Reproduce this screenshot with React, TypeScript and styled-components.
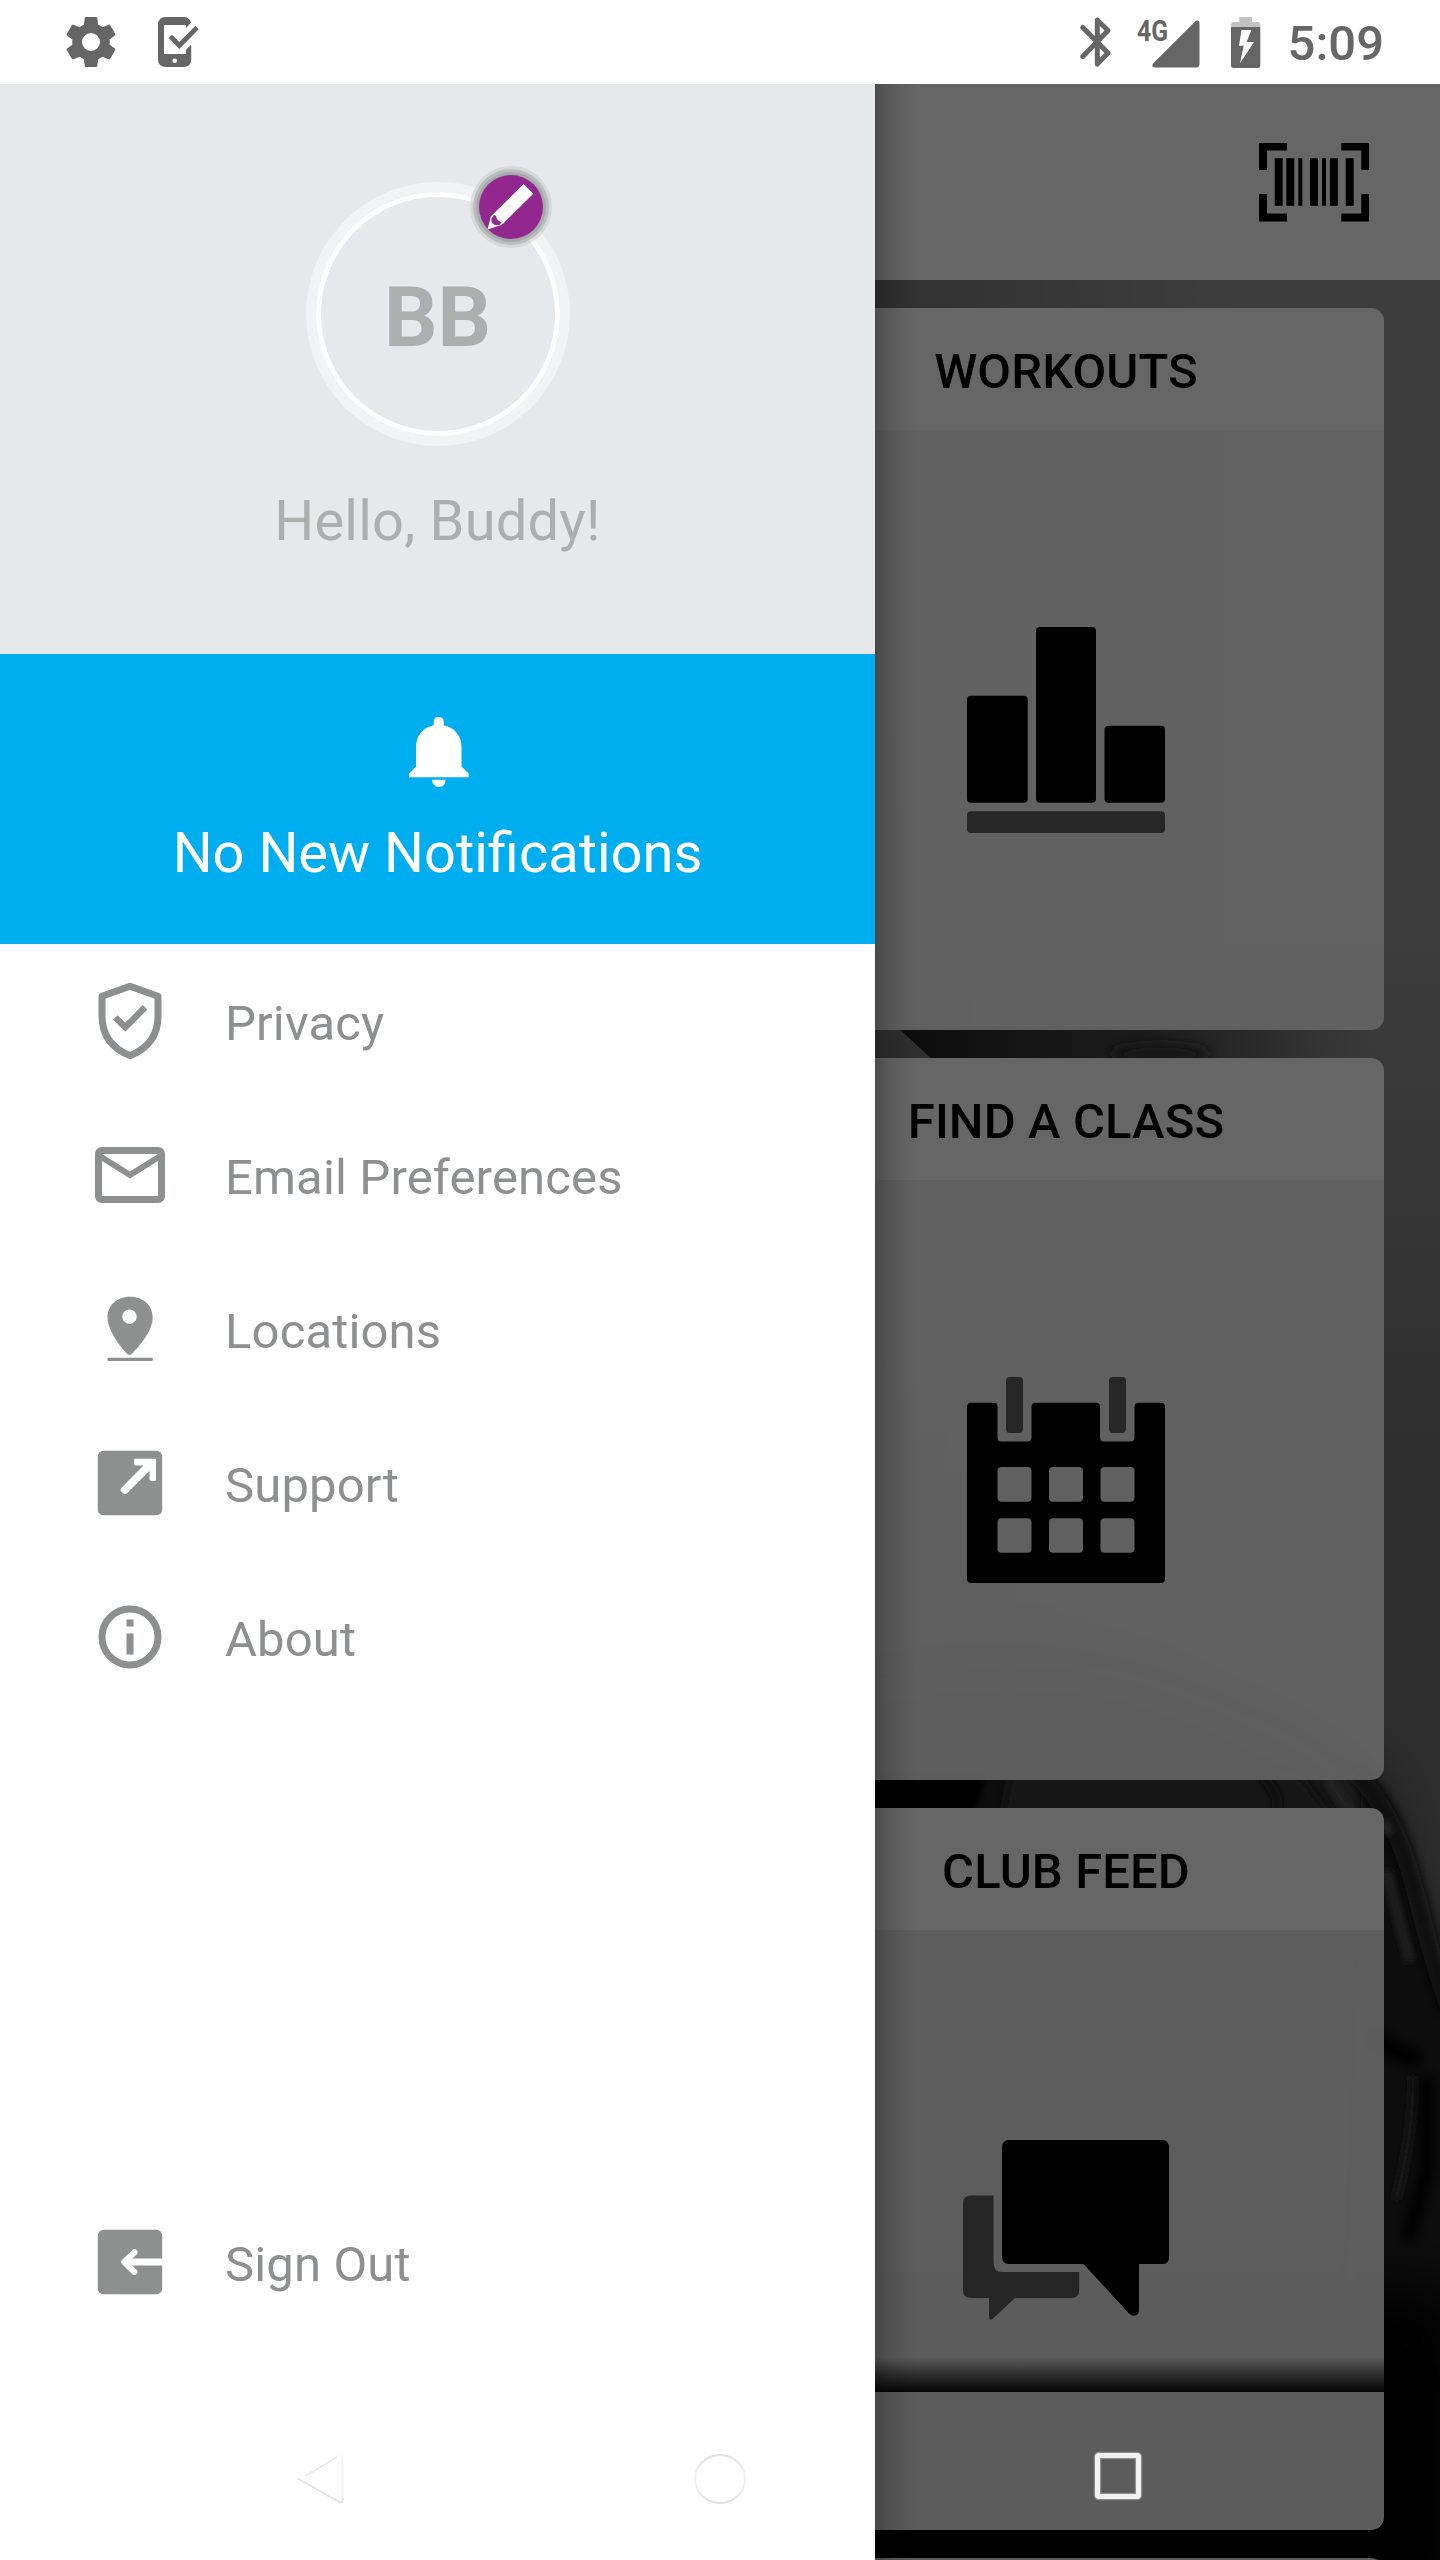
import React from "react";
import styled, { createGlobalStyle } from "styled-components";

const GlobalStyle = createGlobalStyle`
  *, *::before, *::after { box-sizing: border-box; }
  html, body { margin: 0; padding: 0; background: #fff; }
  body { font-family: Roboto, "Noto Sans", sans-serif; }
  svg { display: block; flex: none; }
`;

const Screen = styled.div`
  position: relative;
  width: 1440px;
  height: 2560px;
  overflow: hidden;
  display: flex;
  flex-direction: column;
  background: #fff;
`;

/* ---------- status bar ---------- */

const StatusBar = styled.header`
  height: 84px;
  flex: none;
  display: flex;
  justify-content: space-between;
  padding: 0 56px 0 61px;
  color: #666;
`;

const StatusGroup = styled.div<{ $gap: number }>`
  display: flex;
  align-items: center;
  gap: ${(p) => p.$gap}px;
`;

const Clock = styled.span`
  font-size: 49px;
  font-weight: 500;
  line-height: 58px;
  padding-top: 4px;
  margin-left: -3px;
`;

/* ---------- stage: dashboard with the drawer over it ---------- */

const Stage = styled.div`
  flex: 1;
  min-height: 0;
  display: grid;
  grid-template: minmax(0, 1fr) / minmax(0, 1fr);
  > * {
    grid-area: 1 / 1;
  }
`;

const Scenery = styled.svg`
  width: 1440px;
  height: 2476px;
`;

const Dashboard = styled.main`
  display: flex;
  flex-direction: column;
  z-index: 1;
  overflow: hidden;
`;

const Toolbar = styled.div`
  height: 196px;
  flex: none;
  display: flex;
  align-items: center;
  justify-content: flex-end;
  padding: 0 71px 0 0;
  background: #666;
`;

const CardColumn = styled.div`
  display: flex;
  flex-direction: column;
  gap: 28px;
  padding: 28px 56px 0 748px;
`;

const Card = styled.section`
  height: 722px;
  flex: none;
  display: flex;
  flex-direction: column;
  border-radius: 13px;
  overflow: hidden;
`;

const CardTitle = styled.h2`
  margin: 0;
  height: 122px;
  flex: none;
  display: flex;
  align-items: center;
  justify-content: center;
  padding-top: 5px;
  background: #666;
  color: #000;
  font-size: 49px;
  font-weight: 500;
  line-height: 58px;
  letter-spacing: 0.1px;
`;

const CardBody = styled.div`
  flex: 1;
  display: flex;
  align-items: center;
  justify-content: center;
  background: rgba(102, 102, 102, 0.9);
`;

/* ---------- drawer ---------- */

const Drawer = styled.aside`
  position: relative;
  z-index: 2;
  width: 875px;
  display: flex;
  flex-direction: column;
  background: #fff;
  &::after {
    content: "";
    position: absolute;
    left: 100%;
    top: 0;
    bottom: 0;
    width: 42px;
    background: linear-gradient(
      to right,
      rgba(0, 0, 0, 0.25),
      rgba(0, 0, 0, 0.12) 35%,
      rgba(0, 0, 0, 0.04) 75%,
      transparent
    );
  }
`;

const Profile = styled.div`
  height: 570px;
  flex: none;
  display: flex;
  flex-direction: column;
  align-items: center;
  padding-top: 98px;
  background: #e7e8ec;
  color: #adaeae;
`;

const Avatar = styled.div`
  position: relative;
  width: 264px;
  height: 264px;
  border-radius: 50%;
  border: 10px solid #f2f3f5;
  display: flex;
`;

const AvatarRing = styled.div`
  flex: 1;
  border-radius: 50%;
  border: 5px solid #fff;
  display: flex;
  align-items: center;
  justify-content: center;
  padding-top: 7px;
  font-size: 84px;
  font-weight: 700;
  line-height: 98px;
`;

const EditBadge = styled.div`
  position: absolute;
  top: -17px;
  right: 17px;
  width: 64px;
  height: 64px;
  border-radius: 50%;
  background: #92278f;
  box-shadow: 0 0 0 3px #a7aaaa, 0 0 0 6px #bbbebe, 0 0 0 9px rgba(195, 201, 200, 0.5);
`;

const Greeting = styled.div`
  margin-top: 42px;
  font-size: 56px;
  line-height: 66px;
  letter-spacing: 0.22px;
`;

const Notice = styled.div`
  height: 290px;
  flex: none;
  display: flex;
  flex-direction: column;
  align-items: center;
  padding-top: 63px;
  gap: 33px;
  background: #00adef;
  color: #fff;
  font-size: 56px;
  line-height: 66px;
`;

const Menu = styled.nav`
  display: flex;
  flex-direction: column;
`;

const SignOutArea = styled.div`
  margin-top: auto;
  margin-bottom: 221px;
`;

const MenuRow = styled.div`
  height: 154px;
  display: flex;
  align-items: center;
  gap: 53px;
  padding-left: 88px;
  color: #8e8f8f;
  font-size: 49px;
  line-height: 58px;
  letter-spacing: 0.15px;
`;

const MenuLabel = styled.span`
  padding-top: 5px;
`;

/* ---------- system navigation ---------- */

const NavFade = styled.div`
  position: absolute;
  z-index: 1;
  left: 0;
  right: 0;
  bottom: 168px;
  height: 35px;
  background: linear-gradient(to bottom, rgba(0, 0, 0, 0), rgba(0, 0, 0, 0.5) 50%, rgba(0, 0, 0, 0.95));
`;

const NavBar = styled.div`
  position: absolute;
  z-index: 3;
  left: 0;
  right: 0;
  bottom: 0;
  height: 168px;
  padding: 0 122px 0 118px;
  display: grid;
  grid-template-columns: 404px 396px 400px;
  place-items: center;
`;

/* ---------- icons ---------- */

const GearIcon = () => (
  <svg width="60" height="60" viewBox="0 0 24 24" fill="currentColor">
    <path d="M19.43 12.98c.04-.32.07-.64.07-.98s-.03-.66-.07-.98l2.11-1.65c.19-.15.24-.42.12-.64l-2-3.46c-.12-.22-.39-.3-.61-.22l-2.49 1c-.52-.4-1.08-.73-1.69-.98l-.38-2.65C14.46 2.18 14.25 2 14 2h-4c-.25 0-.46.18-.49.42l-.38 2.65c-.61.25-1.17.59-1.69.98l-2.49-1c-.23-.09-.49 0-.61.22l-2 3.46c-.13.22-.07.49.12.64l2.11 1.65c-.04.32-.07.65-.07.98s.03.66.07.98l-2.11 1.65c-.19.15-.24.42-.12.64l2 3.46c.12.22.39.3.61.22l2.49-1c.52.4 1.08.73 1.69.98l.38 2.65c.03.24.24.42.49.42h4c.25 0 .46-.18.49-.42l.38-2.65c.61-.25 1.17-.59 1.69-.98l2.49 1c.23.09.49 0 .61-.22l2-3.46c.12-.22.07-.49-.12-.64l-2.11-1.65zM12 15.6a3.6 3.6 0 1 1 0-7.2 3.6 3.6 0 0 1 0 7.2z" />
  </svg>
);

const PhoneCheckIcon = () => (
  <svg width="42" height="50" viewBox="0 0 42 50" fill="currentColor">
    <path
      fillRule="evenodd"
      d="M8 0H25.500Q31.500 0 33 5.700L28 11V8H6V37H28V32.700L33.200 27.700V42Q33.200 50 25.500 50H8Q0 50 0 42V8Q0 0 8 0ZM16.700 41.400a2.300 2.300 0 1 0 0 4.600a2.300 2.300 0 1 0 0-4.600Z"
    />
    <path d="M10.700 21L14 17.700L21.300 25L37.300 9L40.700 12.300L21.300 32Z" />
  </svg>
);

const BluetoothIcon = () => (
  <svg width="32" height="50" viewBox="0 0 32 50" fill="none" stroke="currentColor" strokeWidth="5" strokeLinecap="round" strokeLinejoin="round">
    <path d="M2.800 10.500L28 36L17.300 47V3L28 13.500L2.800 39.500" />
  </svg>
);

const SignalText = styled.text`
  font-family: Roboto, sans-serif;
  font-size: 29px;
  font-weight: 700;
`;

const SignalIcon = () => (
  <svg width="66" height="67" viewBox="-2 -8 66 67" fill="currentColor">
    <SignalText x="0" y="23.500" textLength="31" lengthAdjust="spacingAndGlyphs">
      4G
    </SignalText>
    <path d="M58 4.800Q62.500 1.500 62.500 7V47Q62.500 50.500 59 50.500H18Q13.500 50 16.500 46Z" />
  </svg>
);

const BatteryIcon = () => (
  <svg width="30" height="51" viewBox="0 0 30 51">
    <path d="M8.300 0H21V5H27Q29.300 5 29.300 7.500V10H0V7.500Q0 5 2.500 5H8.300Z" fill="#c2c2c2" />
    <path
      fillRule="evenodd"
      fill="#666"
      d="M0 10H29.300V48.500Q29.300 51 27 51H2.500Q0 51 0 48.500ZM10.500 13L8 28.700H12.700L9 46.300L23 25H15.700L20.300 13Z"
    />
  </svg>
);

const BarcodeIcon = () => (
  <svg width="110" height="79" viewBox="0 0 110 79">
    <path d="M0 0H28V7.500H8V27H0ZM82.300 0H110.300V27H102.300V7.500H82.300ZM0 51H8V70.500H28V78.500H0ZM102.300 51H110.300V78.500H82.300V70.500H102.300Z" />
    <path d="M15.700 15.300h8v47.500h-8ZM27.300 15.300h8v47.500h-8ZM39.300 15.300h4v47.500h-4ZM51 15.300h8v47.500h-8ZM63 15.300h4v47.500h-4ZM70.900 15.300h8v47.500h-8ZM86.700 15.300h8v47.500h-8Z" />
  </svg>
);

const PencilIcon = () => (
  <svg width="64" height="64" viewBox="0 0 64 64" fill="#fff">
    <path d="M44.600 9L54.300 18.700L24.500 48.300L22 50L8.500 54.500L12 41L14.600 38.700Z" />
    <path d="M14.500 40.500Q17.500 39.500 17.500 42.500Q17.500 44 20 46L22.300 47.300Q21.500 50 19.500 50.300Q12 50.500 12.300 44Z" fill="#92278f" />
  </svg>
);

const BellIcon = () => (
  <svg width="62" height="70" viewBox="-2 0 62 70" fill="#fff">
    <path d="M24.700 8.200V5Q24.700 0 29.700 0Q34.700 0 34.700 5V8.200C46 10.500 52.500 19 52.500 30V49.500L59.700 56.500V60.300H0V56.500L7 49.500V30C7 19 13.500 10.500 24.700 8.200Z" />
    <path d="M23 62.800H36.700Q36 70 29.900 70Q23.700 70 23 62.800Z" />
  </svg>
);

const icon = { width: 84, height: 84, viewBox: "0 0 84 84" };

const ShieldIcon = () => (
  <svg {...icon} fill="none" stroke="currentColor">
    <path d="M42 7.200L70 17.300V37C70 56 60 69.500 42 76.600C24 69.500 14 56 14 37V17.300Z" strokeWidth="7" strokeLinejoin="round" />
    <path d="M27.300 38.500L37.300 48.200L57 28.300" strokeWidth="6.500" />
  </svg>
);

const MailIcon = () => (
  <svg width="84" height="84" viewBox="0 0 24 24" fill="currentColor">
    <path d="M20 4H4c-1.100 0-2 .9-2 2v12c0 1.100.9 2 2 2h16c1.100 0 2-.9 2-2V6c0-1.100-.9-2-2-2zm0 14H4V8l8 5 8-5v10zm-8-7L4 6h16l-8 5z" />
  </svg>
);

const PinIcon = () => (
  <svg {...icon} fill="currentColor">
    <path
      fillRule="evenodd"
      d="M42 9.700C55.500 9.700 64.700 18.500 64.700 30.500C64.700 44 50.500 60.500 43.500 67Q41.300 68.700 39.500 67C32.500 60.500 19.500 43 19.500 30.500C19.500 18.500 28.500 9.700 42 9.700ZM41.500 22.500a7.200 7.200 0 1 0 0 14.400a7.200 7.200 0 1 0 0-14.400Z"
    />
    <rect x="19.500" y="70.800" width="45.300" height="3.300" rx="1" />
  </svg>
);

const SupportIcon = () => (
  <svg {...icon}>
    <rect x="9.800" y="9.800" width="64.400" height="64.400" rx="5.500" fill="currentColor" />
    <path d="M46.500 17.700H67Q68 17.700 68 18.700V39Q68 40 67 40H63.500Q61.500 40 61.500 38V29.800L39 52.200Q37 54.200 35 52.200L33.300 50.500Q31.500 48.500 33.500 46.700L55.500 24.500H48Q46 24.500 46 22.500V19Q46 17.700 47 17.700Z" fill="#fff" />
  </svg>
);

const InfoIcon = () => (
  <svg {...icon} fill="currentColor">
    <circle cx="42" cy="42" r="28" fill="none" stroke="currentColor" strokeWidth="7" />
    <rect x="38.500" y="24.500" width="7" height="7" />
    <rect x="38.500" y="38.500" width="7" height="21" />
  </svg>
);

const SignOutIcon = () => (
  <svg {...icon}>
    <rect x="9.800" y="9.800" width="64.400" height="64.400" rx="5.500" fill="currentColor" />
    <g fill="none" stroke="#fff" strokeLinecap="round" strokeLinejoin="round">
      <path d="M46.500 32.300L36.200 42L46.500 52" strokeWidth="6" />
      <path d="M38 42H78" strokeWidth="7" strokeLinecap="butt" />
    </g>
  </svg>
);

const ChartIcon = () => (
  <svg width="198" height="206" viewBox="0 0 198 206">
    <rect x="0" y="68.700" width="60.700" height="107" rx="4" />
    <rect x="69" y="0" width="60" height="175.700" rx="4" />
    <rect x="137.500" y="98.700" width="60.500" height="77" rx="4" />
    <rect x="0" y="184.300" width="198" height="21.700" rx="4" fill="#272727" />
  </svg>
);

const CELLS = [30.5, 82, 133.5];

const CalendarIcon = () => (
  <svg width="198" height="206" viewBox="0 0 198 206">
    <path d="M4 25.700H27Q30.500 25.700 30.500 29.700V60.500Q30.500 64.500 34.500 64.500H60.500Q64.500 64.500 64.500 60.500V29.700Q64.500 25.700 68.500 25.700H129Q133 25.700 133 29.700V60.500Q133 64.500 137 64.500H163.500Q167.500 64.500 167.500 60.500V29.700Q167.500 25.700 171.500 25.700H194Q198 25.700 198 29.700V202Q198 206 194 206H4Q0 206 0 202V29.700Q0 25.700 4 25.700Z" />
    <rect x="39" y="0" width="17" height="56" rx="4" fill="#272727" />
    <rect x="142" y="0" width="17" height="56" rx="4" fill="#272727" />
    {CELLS.map((x) => (
      <g key={x} fill="#606060">
        <rect x={x} y="90" width="34" height="34.700" rx="4" />
        <rect x={x} y="141.300" width="34" height="34.400" rx="4" />
      </g>
    ))}
  </svg>
);

const ChatIcon = () => (
  <svg width="206" height="180" viewBox="0 0 206 180">
    <path d="M46 0H199Q206 0 206 8V117Q206 124 200 124H176V170Q176 175.700 171 175.700Q168.500 175.700 166 173.500L120.500 124H46Q39 124 39 117V8Q39 0 46 0Z" />
    <path
      fill="#262626"
      d="M8 55.500H30.500V122Q30.500 132 39 132H116.200V150Q116.200 158 108.500 158H52L29.500 179Q26 181 26 177V158H8Q0 158 0 150V63.500Q0 55.500 8 55.500Z"
    />
  </svg>
);

const BackIcon = () => (
  <svg width="56" height="60" viewBox="0 0 56 60" fill="none" strokeLinecap="round">
    <path d="M50.500 10V55" stroke="#f6f6f6" strokeWidth="2" />
    <path d="M44.500 11.500L14 29.500" stroke="#e9e9e9" strokeWidth="2" />
    <path d="M6.500 33L47.500 56Q51 57 51 53" stroke="#e4e4e4" strokeWidth="2" />
  </svg>
);

const HomeIcon = () => (
  <svg width="60" height="62" viewBox="0 0 60 62" fill="none">
    <defs>
      <linearGradient id="halo" x1="0" y1="0" x2="0" y2="1">
        <stop offset="0" stopColor="#e0e0e0" />
        <stop offset="0.45" stopColor="#f1f1f1" />
        <stop offset="0.6" stopColor="#f1f1f1" />
        <stop offset="1" stopColor="#e0e0e0" />
      </linearGradient>
    </defs>
    <ellipse cx="30" cy="34" rx="25" ry="24" stroke="url(#halo)" strokeWidth="2" />
  </svg>
);

const RecentIcon = () => (
  <svg width="50" height="50" viewBox="0 0 50 50" fill="none">
    <rect x="4.500" y="4.500" width="41" height="41" rx="1.500" stroke="#aaa" strokeOpacity="0.6" strokeWidth="7.500" />
    <rect x="4.500" y="4.500" width="41" height="41" rx="1.500" stroke="#f1f1f1" strokeWidth="5" />
  </svg>
);

/* Dim gym photograph behind the cards. */
const Backdrop = () => (
  <Scenery viewBox="0 84 1440 2476" preserveAspectRatio="none">
    <defs>
      <linearGradient id="wall" x1="0" y1="84" x2="0" y2="2560" gradientUnits="userSpaceOnUse">
        <stop offset="0" stopColor="#3d3d3d" />
        <stop offset="0.34" stopColor="#3c3c3c" />
        <stop offset="0.45" stopColor="#363636" />
        <stop offset="0.58" stopColor="#2d2d2d" />
        <stop offset="0.72" stopColor="#2d2d2d" />
        <stop offset="0.8" stopColor="#222" />
        <stop offset="0.88" stopColor="#020202" />
        <stop offset="1" stopColor="#000" />
      </linearGradient>
      <linearGradient id="band" x1="900" y1="0" x2="1400" y2="0" gradientUnits="userSpaceOnUse">
        <stop offset="0" stopColor="#0c0c0c" />
        <stop offset="0.25" stopColor="#151515" />
        <stop offset="0.5" stopColor="#1c1c1d" />
        <stop offset="0.75" stopColor="#2d2d2d" />
        <stop offset="1" stopColor="#383838" stopOpacity="0" />
      </linearGradient>
      <linearGradient id="left" x1="875" y1="0" x2="1240" y2="0" gradientUnits="userSpaceOnUse">
        <stop offset="0" stopColor="#000" stopOpacity="0.2" />
        <stop offset="1" stopColor="#000" stopOpacity="0" />
      </linearGradient>
      <filter id="soft" filterUnits="userSpaceOnUse" x="700" y="84" width="840" height="2500">
        <feGaussianBlur stdDeviation="6" />
      </filter>
      <filter id="wide" filterUnits="userSpaceOnUse" x="700" y="84" width="840" height="2500">
        <feGaussianBlur stdDeviation="30" />
      </filter>
      <filter id="fine" filterUnits="userSpaceOnUse" x="700" y="84" width="840" height="2500">
        <feGaussianBlur stdDeviation="3" />
      </filter>
    </defs>
    <rect x="0" y="84" width="1440" height="2476" fill="url(#wall)" />
    <rect x="875" y="84" width="365" height="2000" fill="url(#left)" />
    <path d="M897 1027L935 1062H1400V1027Z" fill="url(#band)" />
    <ellipse cx="1160" cy="1054" rx="50" ry="10" fill="#151518" filter="url(#soft)" />
    {/* machine silhouette */}
    <path d="M800 1700Q1050 1620 1230 1710Q1320 1740 1370 1800Q1390 1880 1400 1990V2560H800Z" fill="#0f0f0f" filter="url(#wide)" />
    <path d="M1362 1775Q1395 1800 1410 1880T1450 1990V2560H1340Z" fill="#0f0f0f" filter="url(#soft)" />
    <path d="M1010 1776H1300L1340 1830H1000Z" fill="#191919" filter="url(#soft)" />
    <path d="M800 1776H987L975 1812H800Z" fill="#000" filter="url(#fine)" />
    <path d="M1262 1776Q1285 1800 1274 1815" stroke="#090909" strokeWidth="10" fill="none" filter="url(#fine)" />
    <path d="M1325 1774L1350 1812" stroke="#222" strokeWidth="10" fill="none" filter="url(#fine)" />
    <path d="M1352 1770Q1395 1810 1415 1890T1450 2010" stroke="#0a0a0a" strokeWidth="18" fill="none" filter="url(#soft)" />
    <path d="M1386 1822L1389 1834" stroke="#292929" strokeWidth="7" fill="none" filter="url(#fine)" />
    <path d="M1386 1870L1410 1962" stroke="#242424" strokeWidth="9" fill="none" filter="url(#fine)" />
    <path d="M1370 2030Q1390 2056 1420 2058" stroke="#000" strokeWidth="18" fill="none" filter="url(#soft)" />
    <path d="M1413 2076Q1414 2130 1396 2200" stroke="#181818" strokeWidth="8" fill="none" filter="url(#fine)" />
    <path d="M1427 2076V2170L1408 2240" stroke="#050505" strokeWidth="14" fill="none" filter="url(#soft)" />
    <rect x="800" y="2290" width="660" height="330" fill="#000" filter="url(#wide)" />
  </Scenery>
);

const MENU = [
  { label: "Privacy", Icon: ShieldIcon },
  { label: "Email Preferences", Icon: MailIcon },
  { label: "Locations", Icon: PinIcon },
  { label: "Support", Icon: SupportIcon },
  { label: "About", Icon: InfoIcon },
];

const CARDS = [
  { title: "WORKOUTS", Icon: ChartIcon },
  { title: "FIND A CLASS", Icon: CalendarIcon },
  { title: "CLUB FEED", Icon: ChatIcon },
];

export default function App() {
  return (
    <>
      <GlobalStyle />
      <Screen>
        <StatusBar>
          <StatusGroup $gap={37}>
            <GearIcon />
            <PhoneCheckIcon />
          </StatusGroup>
          <StatusGroup $gap={30}>
            <StatusGroup $gap={23}>
              <BluetoothIcon />
              <SignalIcon />
            </StatusGroup>
            <BatteryIcon />
            <Clock>5:09</Clock>
          </StatusGroup>
        </StatusBar>

        <Stage>
          <Backdrop />
          <Dashboard>
            <Toolbar>
              <BarcodeIcon />
            </Toolbar>
            <CardColumn>
              {CARDS.map(({ title, Icon }) => (
                <Card key={title}>
                  <CardTitle>{title}</CardTitle>
                  <CardBody>
                    <Icon />
                  </CardBody>
                </Card>
              ))}
              <Card>
                <CardBody />
              </Card>
            </CardColumn>
          </Dashboard>

          <Drawer>
            <Profile>
              <Avatar>
                <AvatarRing>BB</AvatarRing>
                <EditBadge>
                  <PencilIcon />
                </EditBadge>
              </Avatar>
              <Greeting>Hello, Buddy!</Greeting>
            </Profile>
            <Notice>
              <BellIcon />
              <span>No New Notifications</span>
            </Notice>
            <Menu>
              {MENU.map(({ label, Icon }) => (
                <MenuRow key={label}>
                  <Icon />
                  <MenuLabel>{label}</MenuLabel>
                </MenuRow>
              ))}
            </Menu>
            <SignOutArea>
              <MenuRow>
                <SignOutIcon />
                <MenuLabel>Sign Out</MenuLabel>
              </MenuRow>
            </SignOutArea>
          </Drawer>
        </Stage>

        <NavFade />
        <NavBar>
          <BackIcon />
          <HomeIcon />
          <RecentIcon />
        </NavBar>
      </Screen>
    </>
  );
}
